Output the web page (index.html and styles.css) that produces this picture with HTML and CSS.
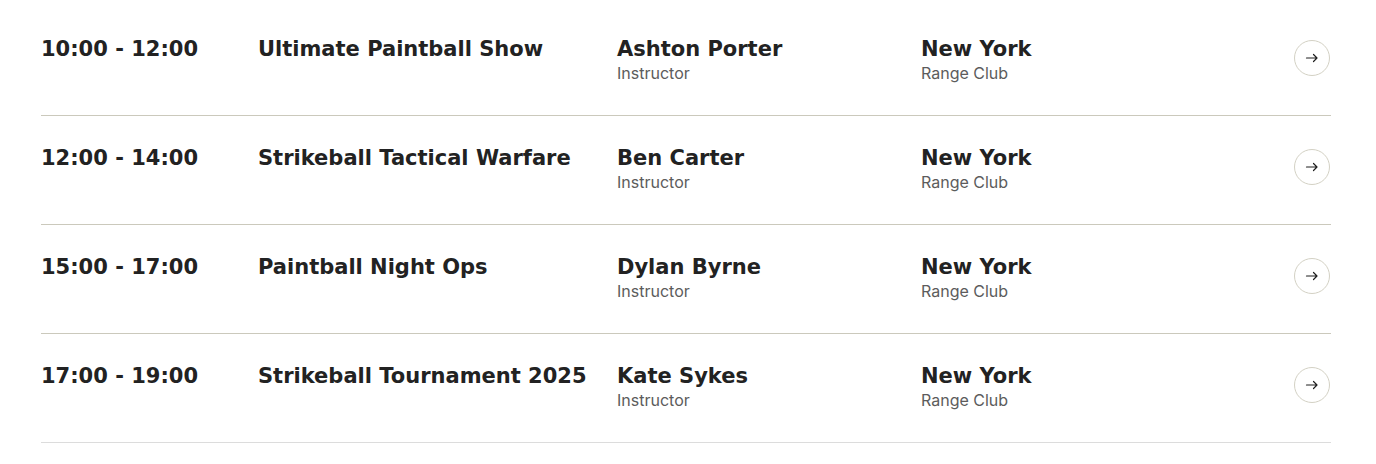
FILE: index.html
```html
<!DOCTYPE html>
<html lang="en">
<head>
<meta charset="utf-8">
<title>Schedule</title>
<link rel="stylesheet" href="styles.css">
</head>
<body>
<div class="schedule">
  <div class="row">
    <div class="time">10:00 - 12:00</div>
    <div class="title">Ultimate Paintball Show</div>
    <div class="cell"><div class="name">Ashton Porter</div><div class="sub">Instructor</div></div>
    <div class="cell"><div class="name">New York</div><div class="sub">Range Club</div></div>
    <a class="go" href="#"><svg viewBox="0 0 16 16" width="16" height="16"><path d="M2.5 8h10.5M9.5 4.5 13 8l-3.5 3.5" fill="none" stroke="#1e1e1e" stroke-width="1.2" stroke-linecap="round" stroke-linejoin="round"/></svg></a>
  </div>
  <div class="row">
    <div class="time">12:00 - 14:00</div>
    <div class="title">Strikeball Tactical Warfare</div>
    <div class="cell"><div class="name">Ben Carter</div><div class="sub">Instructor</div></div>
    <div class="cell"><div class="name">New York</div><div class="sub">Range Club</div></div>
    <a class="go" href="#"><svg viewBox="0 0 16 16" width="16" height="16"><path d="M2.5 8h10.5M9.5 4.5 13 8l-3.5 3.5" fill="none" stroke="#1e1e1e" stroke-width="1.2" stroke-linecap="round" stroke-linejoin="round"/></svg></a>
  </div>
  <div class="row">
    <div class="time">15:00 - 17:00</div>
    <div class="title">Paintball Night Ops</div>
    <div class="cell"><div class="name">Dylan Byrne</div><div class="sub">Instructor</div></div>
    <div class="cell"><div class="name">New York</div><div class="sub">Range Club</div></div>
    <a class="go" href="#"><svg viewBox="0 0 16 16" width="16" height="16"><path d="M2.5 8h10.5M9.5 4.5 13 8l-3.5 3.5" fill="none" stroke="#1e1e1e" stroke-width="1.2" stroke-linecap="round" stroke-linejoin="round"/></svg></a>
  </div>
  <div class="row last">
    <div class="time">17:00 - 19:00</div>
    <div class="title">Strikeball Tournament 2025</div>
    <div class="cell"><div class="name">Kate Sykes</div><div class="sub">Instructor</div></div>
    <div class="cell"><div class="name">New York</div><div class="sub">Range Club</div></div>
    <a class="go" href="#"><svg viewBox="0 0 16 16" width="16" height="16"><path d="M2.5 8h10.5M9.5 4.5 13 8l-3.5 3.5" fill="none" stroke="#1e1e1e" stroke-width="1.2" stroke-linecap="round" stroke-linejoin="round"/></svg></a>
  </div>
</div>
</body>
</html>
```
FILE: styles.css
```css
* { box-sizing: border-box; }
body {
  margin: 0;
  background: #ffffff;
  color: #1c1c1c;
  font-family: Inter, "Noto Sans", sans-serif;
}
.schedule {
  width: 1290px;
  margin: 7px 0 0 41px;
}
.row {
  display: grid;
  grid-template-columns: 217px 359px 304px 1fr 36px;
  align-items: start;
  height: 109px;
  padding-top: 30px;
  border-bottom: 1px solid #cbc9bc;
}
.row.last { border-bottom-color: #dcdcdc; }
.time, .title, .name {
  font-family: "DejaVu Sans", sans-serif;
  font-size: 21px;
  font-weight: 700;
  line-height: 24px;
  color: #222222;
}
.sub {
  margin-top: 2px;
  font-size: 16px;
  line-height: 20px;
  color: #5c5c5c;
}
.go {
  width: 36px;
  height: 36px;
  margin: 3px 0 0 -1px;
  border: 1px solid #d3d1c4;
  border-radius: 50%;
  display: flex;
  align-items: center;
  justify-content: center;
}
```
